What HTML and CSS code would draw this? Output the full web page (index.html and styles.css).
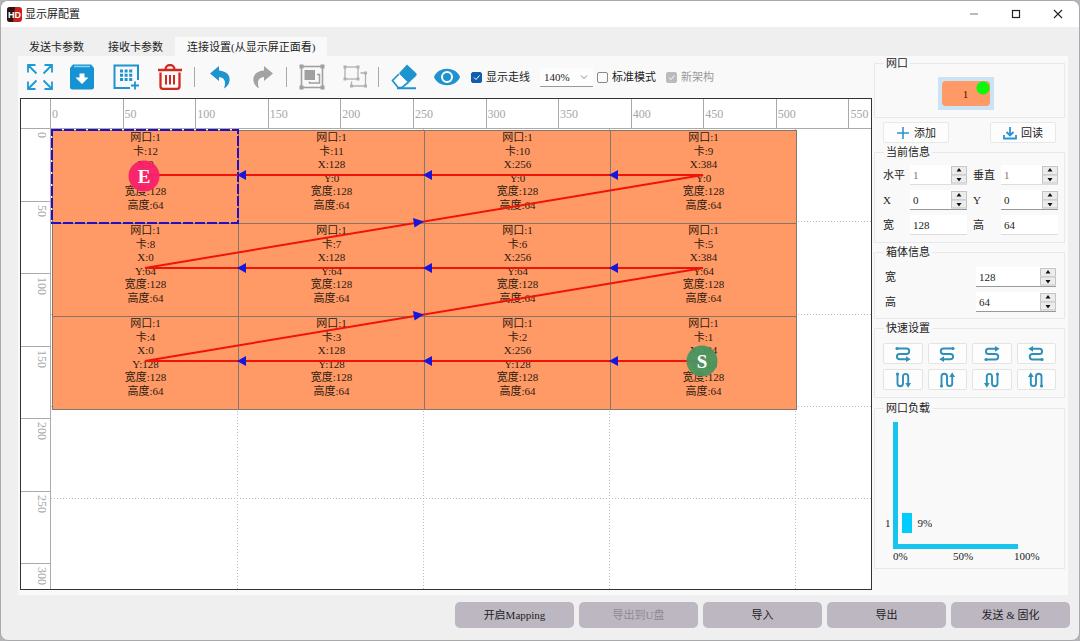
FILE: index.html
```html
<!DOCTYPE html>
<html lang="zh-CN">
<head>
<meta charset="utf-8">
<title>显示屏配置</title>
<link rel="stylesheet" href="styles.css">
</head>
<body>
<svg class="defs" aria-hidden="true">
  <symbol id="snake" viewBox="0 0 16 16">
    <circle cx="2" cy="2.500" r="1.600" fill="currentColor"/>
    <path d="M2 2.500H11.500a2.750 2.750 0 0 1 0 5.500H4.500a2.600 2.600 0 0 0 0 5.200H12" fill="none" stroke="currentColor" stroke-width="1.900"/>
    <path d="M11 10.300L15.700 13.200L11 16Z" fill="currentColor"/>
  </symbol>
</svg>
<div class="window">
  <header class="titlebar">
    <svg class="logo" viewBox="0 0 15 15">
      <rect width="15" height="15" rx="3" fill="#c9201c"/>
      <path d="M3 0H8L6 15H3a3 3 0 0 1-3-3V3a3 3 0 0 1 3-3Z" fill="#2a1414"/>
      <text x="1" y="11" class="logo-text">HD</text>
    </svg>
    <h1>显示屏配置</h1>
    <div class="winctl">
      <button aria-label="最小化"><svg viewBox="0 0 12 12"><path d="M2 6H10" stroke="#777"/></svg></button>
      <button aria-label="最大化"><svg viewBox="0 0 12 12"><rect x="2.500" y="2.500" width="7" height="7" fill="none" stroke="#222" stroke-width="1.200"/></svg></button>
      <button aria-label="关闭"><svg viewBox="0 0 12 12"><path d="M2 2L10 10M10 2L2 10" stroke="#222" stroke-width="1.100"/></svg></button>
    </div>
  </header>

  <nav class="tabs" role="tablist">
    <button role="tab">发送卡参数</button>
    <button role="tab">接收卡参数</button>
    <button role="tab" class="active" aria-selected="true">连接设置(从显示屏正面看)</button>
  </nav>

  <main class="page">
    <section class="work">
      <div class="toolbar">
        <button class="tool" aria-label="全屏"><svg viewBox="0 0 26 26" fill="none" stroke="#1d9ad6" stroke-width="1.800"><path d="M1 8.500V1H8.500M1 1L9.500 9.500M17.500 1H25V8.500M25 1L16.500 9.500M1 17.500V25H8.500M1 25L9.500 16.500M17.500 25H25V17.500M25 25L16.500 16.500"/></svg></button>
        <button class="tool" aria-label="保存"><svg viewBox="0 0 26 26"><path d="M4 .5H22L25 4V23a2.500 2.500 0 0 1-2.500 2.500H3.500A2.500 2.500 0 0 1 1 23V4Z" fill="#1593d2"/><path d="M5 2.500H21" stroke="#8fd0ee" stroke-width="1.500"/><path d="M10.500 9.500H15.500V13.500H19.500L13 20L6.500 13.500H10.500Z" fill="#fff"/></svg></button>
        <button class="tool" aria-label="添加网格"><svg viewBox="0 0 26 26" fill="none" stroke="#1d93d0"><path d="M17 24H1.500V1.500H25V16" stroke-width="2"/><path d="M7 7H19.500M7 11.200H19.500M7 15.400H19.500" stroke-width="3" stroke-dasharray="3 1.600"/><path d="M18 21.500H26M22 17.500V25.500" stroke-width="1.800"/></svg></button>
        <button class="tool" aria-label="删除"><svg viewBox="0 0 26 26" fill="none" stroke="#cf2a20" stroke-width="2.300"><path d="M1 6H25M8.500 5.500a4.500 4.500 0 0 1 9 0M3.500 8.500V22.500a2.300 2.300 0 0 0 2.300 2.300H20.200a2.300 2.300 0 0 0 2.300-2.300V8.500"/><path d="M9 11V20.500M13 11V20.500M17 11V20.500" stroke-width="2"/></svg></button>
        <span class="sep"></span>
        <button class="tool" aria-label="撤销"><svg viewBox="0 0 26 26"><path d="M3 9.500L12 2V6.500C20 7 23.500 12 22.500 17C22 20.500 19.500 23 17 24.500C19 19 18.500 13.500 12 13V17Z" fill="#1d93d0"/></svg></button>
        <button class="tool" aria-label="重做"><svg viewBox="0 0 26 26"><path d="M23 9.500L14 2V6.500C6 7 2.500 12 3.500 17C4 20.500 6.500 23 9 24.500C7 19 7.500 13.500 14 13V17Z" fill="#a3a3a3"/></svg></button>
        <span class="sep"></span>
        <button class="tool" aria-label="组合" disabled><svg viewBox="0 0 26 26" fill="none" stroke="#a0a0a0"><rect x="2.500" y="2.500" width="21" height="21" stroke-width="1.600"/><path d="M5.500 6H16V16H5.500Z" fill="#a0a0a0" stroke="none"/><path d="M18 10.500H20.500V19H10.500V17.500" stroke-width="1.500"/><path d="M.5.500h4v4h-4ZM21.500.500h4v4h-4ZM.5 21.500h4v4h-4ZM21.500 21.500h4v4h-4Z" fill="#a0a0a0" stroke="none"/></svg></button>
        <button class="tool" aria-label="取消组合" disabled><svg viewBox="0 0 26 26" fill="none" stroke="#b0b0b0" stroke-width="1.300"><rect x="3" y="3" width="13" height="12"/><path d="M18.500 9H23.500V22H9.500V17.500"/><path d="M1.500 1.500h3v3h-3ZM14.500 1.500h3v3h-3ZM1.500 13.500h3v3h-3ZM14.500 13.500h3v3h-3ZM22 7.500h3v3h-3ZM22 20.500h3v3h-3ZM8 20.500h3v3h-3Z" fill="#b0b0b0" stroke="none"/></svg></button>
        <span class="sep"></span>
        <button class="tool" aria-label="擦除"><svg viewBox="0 0 26 26"><path d="M16 .5L25.500 9.500V11.500L17 19.500L8.500 10V8.500Z" fill="#1d93d0"/><path d="M8 10L1.500 16.500L7 23.500H11L17 18.500" fill="#fff" stroke="#1d93d0" stroke-width="1.700"/><path d="M6 24.200H25" stroke="#1d93d0" stroke-width="2"/></svg></button>
        <button class="tool" aria-label="预览"><svg viewBox="0 0 26 26"><path d="M0 13C4 2 22 2 26 13C22 24 4 24 0 13Z" fill="#1d93d0"/><circle cx="13" cy="13" r="5" fill="#1d93d0" stroke="#fff" stroke-width="2"/></svg></button>
        <div class="options">
          <label><input type="checkbox" checked>显示走线</label>
          <select aria-label="缩放"><option>140%</option></select>
          <label><input type="checkbox">标准模式</label>
          <label class="off"><input type="checkbox" checked disabled>新架构</label>
        </div>
      </div>

      <div class="canvas">
        <div class="corner"></div>
        <div class="ruler-x"><div class="ticks-x">
          <span>0</span><span>50</span><span>100</span><span>150</span><span>200</span><span>250</span><span>300</span><span>350</span><span>400</span><span>450</span><span>500</span><span>550</span>
        </div></div>
        <div class="ruler-y"><div class="ticks-y">
          <span>0</span><span>50</span><span>100</span><span>150</span><span>200</span><span>250</span><span>300</span>
        </div></div>
        <div class="plot">
          <svg class="guides" aria-hidden="true">
            <path d="M186.500 0V2000M372.500 0V2000M558.500 0V2000M744.500 0V2000M0 92.500H3000M0 185.500H3000M0 277.500H3000M0 369.500H3000"/>
          </svg>
          <div class="board">
            <div class="card"><span>网口:1</span><span>卡:12</span><span>X:0</span><span>Y:0</span><span>宽度:128</span><span>高度:64</span></div>
            <div class="card"><span>网口:1</span><span>卡:11</span><span>X:128</span><span>Y:0</span><span>宽度:128</span><span>高度:64</span></div>
            <div class="card"><span>网口:1</span><span>卡:10</span><span>X:256</span><span>Y:0</span><span>宽度:128</span><span>高度:64</span></div>
            <div class="card"><span>网口:1</span><span>卡:9</span><span>X:384</span><span>Y:0</span><span>宽度:128</span><span>高度:64</span></div>
            <div class="card"><span>网口:1</span><span>卡:8</span><span>X:0</span><span>Y:64</span><span>宽度:128</span><span>高度:64</span></div>
            <div class="card"><span>网口:1</span><span>卡:7</span><span>X:128</span><span>Y:64</span><span>宽度:128</span><span>高度:64</span></div>
            <div class="card"><span>网口:1</span><span>卡:6</span><span>X:256</span><span>Y:64</span><span>宽度:128</span><span>高度:64</span></div>
            <div class="card"><span>网口:1</span><span>卡:5</span><span>X:384</span><span>Y:64</span><span>宽度:128</span><span>高度:64</span></div>
            <div class="card"><span>网口:1</span><span>卡:4</span><span>X:0</span><span>Y:128</span><span>宽度:128</span><span>高度:64</span></div>
            <div class="card"><span>网口:1</span><span>卡:3</span><span>X:128</span><span>Y:128</span><span>宽度:128</span><span>高度:64</span></div>
            <div class="card"><span>网口:1</span><span>卡:2</span><span>X:256</span><span>Y:128</span><span>宽度:128</span><span>高度:64</span></div>
            <div class="card"><span>网口:1</span><span>卡:1</span><span>X:384</span><span>Y:128</span><span>宽度:128</span><span>高度:64</span></div>
            <svg class="wires" viewBox="0 0 744 279">
              <rect class="selection" x="0" y="0" width="186" height="93"/>
              <path class="wire" d="M651 231H93L651 138H93L651 45H93"/>
              <g fill="#1616dc">
                <path d="M185 45l9-5v10ZM371 45l9-5v10ZM557 45l9-5v10Z"/>
                <path d="M185 138l9-5v10ZM371 138l9-5v10ZM557 138l9-5v10Z"/>
                <path d="M185 231l9-5v10ZM371 231l9-5v10ZM557 231l9-5v10Z"/>
                <path d="M372 91.500l-11-3.500l1.500 9.600ZM372 184.500l-11-3.500l1.500 9.600Z"/>
              </g>
              <circle cx="92" cy="46" r="15.500" fill="#f8206b" fill-opacity=".95"/>
              <text class="end" x="92" y="53">E</text>
              <circle cx="650" cy="231" r="15.500" fill="#4a955f" fill-opacity=".95"/>
              <text class="end" x="650" y="238">S</text>
            </svg>
          </div>
        </div>
      </div>
    </section>

    <aside class="side">
      <fieldset class="ports">
        <legend>网口</legend>
        <button class="port"><span>1</span></button>
      </fieldset>
      <div class="actions">
        <button><svg viewBox="0 0 14 14"><path d="M7 1V13M1 7H13" stroke="#2b93cf" stroke-width="1.600"/></svg>添加</button>
        <button><svg viewBox="0 0 14 14" fill="none" stroke="#2b93cf" stroke-width="1.800"><path d="M7 1V9M3.500 6L7 9.500L10.500 6M1 9V12.500H13V9"/></svg>回读</button>
      </div>
      <fieldset class="info">
        <legend>当前信息</legend>
        <label for="h">水平</label>
        <div class="field dim"><input id="h" value="1"><div class="spin"><button aria-label="增加"></button><button aria-label="减少"></button></div></div>
        <label for="v">垂直</label>
        <div class="field dim"><input id="v" value="1"><div class="spin"><button aria-label="增加"></button><button aria-label="减少"></button></div></div>
        <label for="x">X</label>
        <div class="field"><input id="x" value="0"><div class="spin"><button aria-label="增加"></button><button aria-label="减少"></button></div></div>
        <label for="y">Y</label>
        <div class="field"><input id="y" value="0"><div class="spin"><button aria-label="增加"></button><button aria-label="减少"></button></div></div>
        <label for="w">宽</label>
        <div class="field flat"><input id="w" value="128"></div>
        <label for="t">高</label>
        <div class="field flat"><input id="t" value="64"></div>
      </fieldset>
      <fieldset class="cabinet">
        <legend>箱体信息</legend>
        <label for="cw">宽</label>
        <div class="field"><input id="cw" value="128"><div class="spin"><button aria-label="增加"></button><button aria-label="减少"></button></div></div>
        <label for="ch">高</label>
        <div class="field"><input id="ch" value="64"><div class="spin"><button aria-label="增加"></button><button aria-label="减少"></button></div></div>
      </fieldset>
      <fieldset class="quick">
        <legend>快速设置</legend>
        <button aria-label="左上横向"><svg viewBox="0 0 16 16"><use href="#snake" width="16" height="16"/></svg></button>
        <button aria-label="右上横向"><svg viewBox="0 0 16 16"><g transform="matrix(-1 0 0 1 16 0)"><use href="#snake" width="16" height="16"/></g></svg></button>
        <button aria-label="左下横向"><svg viewBox="0 0 16 16"><g transform="matrix(1 0 0 -1 0 16)"><use href="#snake" width="16" height="16"/></g></svg></button>
        <button aria-label="右下横向"><svg viewBox="0 0 16 16"><g transform="matrix(-1 0 0 -1 16 16)"><use href="#snake" width="16" height="16"/></g></svg></button>
        <button aria-label="左上纵向"><svg viewBox="0 0 16 16"><g transform="matrix(0 1 1 0 0 0)"><use href="#snake" width="16" height="16"/></g></svg></button>
        <button aria-label="左下纵向"><svg viewBox="0 0 16 16"><g transform="matrix(0 -1 1 0 0 16)"><use href="#snake" width="16" height="16"/></g></svg></button>
        <button aria-label="右上纵向"><svg viewBox="0 0 16 16"><g transform="matrix(0 1 -1 0 16 0)"><use href="#snake" width="16" height="16"/></g></svg></button>
        <button aria-label="右下纵向"><svg viewBox="0 0 16 16"><g transform="matrix(0 -1 -1 0 16 16)"><use href="#snake" width="16" height="16"/></g></svg></button>
      </fieldset>
      <fieldset class="load">
        <legend>网口负载</legend>
        <div class="chart">
          <span class="cat">1</span>
          <div class="bars"><span class="bar" style="width:9%"></span><span>9%</span></div>
          <div class="axis"><span>0%</span><span>50%</span><span>100%</span></div>
        </div>
      </fieldset>
    </aside>
  </main>

  <footer class="footer">
    <button>开启Mapping</button>
    <button disabled>导出到U盘</button>
    <button>导入</button>
    <button>导出</button>
    <button>发送 &amp; 固化</button>
  </footer>
</div>
</body>
</html>
```
FILE: styles.css
```css
* { box-sizing: border-box; }
body {
  margin: 0;
  background: #b4b4b8;
  color: #222;
  font: 11px/14px "Liberation Serif", "Noto Sans CJK SC", serif;
}
button, input, select { font: inherit; color: inherit; margin: 0; }
button { border: 0; padding: 0; background: none; }
svg { display: block; }
.defs { position: absolute; width: 0; height: 0; }

.window {
  display: flex;
  flex-direction: column;
  min-height: 100vh;
  border: 1px solid #a9a9ab;
  border-radius: 8px;
  overflow: hidden;
  background: #efefef;
}

.titlebar {
  display: flex;
  align-items: center;
  height: 26px;
  padding-left: 6px;
  background: #fff;
}
.logo { width: 15px; height: 15px; }
.logo-text { font: bold 9px "Liberation Sans", sans-serif; fill: #fff; }
.titlebar h1 { margin: 0 auto 0 3px; font-size: 11px; font-weight: normal; }
.winctl { display: flex; }
.winctl button { width: 42px; display: grid; place-items: center; }
.winctl svg { width: 12px; height: 12px; }

.tabs { display: flex; padding: 10px 16px 0; }
.tabs button { height: 19px; padding: 0 12px; }
.tabs .active { background: #f9f9f9; }

.page {
  flex: 1;
  display: flex;
  margin: 0 11px 0 17px;
  background: #f9f9f9;
}
.work { flex: 1; min-width: 0; display: flex; flex-direction: column; padding: 0 0 5px 2px; }

.toolbar { display: flex; align-items: center; height: 42px; }
.tool { width: 43px; display: grid; place-items: center; }
.tool:first-child { width: 40px; }
.tool:nth-child(-n+4):not(:first-child) { width: 44px; }
.tool svg { width: 26px; height: 26px; }
.sep { width: 1px; height: 20px; margin: 0 3px 0 2px; background: #aaa; }
.options { display: flex; align-items: center; gap: 4px; padding-left: 3px; white-space: nowrap; }
.options label { display: flex; align-items: center; gap: 4px; margin-right: 6px; }
.options input {
  appearance: none;
  width: 11px;
  height: 11px;
  border: 1px solid #888;
  border-radius: 2px;
  background: #fafafa;
}
.options input:checked {
  border-color: #0f5fae;
  background: #0f5fae url("data:image/svg+xml,%3Csvg xmlns='http://www.w3.org/2000/svg' viewBox='0 0 9 9'%3E%3Cpath d='M2 4.500L4 6.500L7.500 2.500' fill='none' stroke='white'/%3E%3C/svg%3E");
}
.options input:disabled { border-color: #bbb; background-color: #bbb; }
.options .off { color: #999; }
.options select {
  appearance: none;
  width: 53px;
  height: 19px;
  padding: 0 4px;
  border: 0;
  border-bottom: 1px solid #999;
  border-radius: 0;
  background: #fdfdfd url("data:image/svg+xml,%3Csvg xmlns='http://www.w3.org/2000/svg' viewBox='0 0 8 8'%3E%3Cpath d='M1 2.500L4 5.500L7 2.500' fill='none' stroke='%23888'/%3E%3C/svg%3E") no-repeat right 5px center / 8px 8px;
}

.canvas {
  flex: 1;
  display: grid;
  grid-template: 30px 1fr / 30px 1fr;
  border: 1px solid #333;
  background: #fff;
  color: #a6a6a6;
  font-size: 12px;
}
.corner { border-bottom: 1px solid #aaa; border-right: 1px solid #aaa; }
.ruler-x { min-width: 0; overflow: hidden; border-bottom: 1px solid #aaa; }
.ticks-x { display: grid; grid-template-columns: repeat(12, 1fr); width: 871px; height: 100%; margin-left: -1px; }
.ticks-x span { border-left: 1px solid #aaa; padding: 8px 0 0 1px; }
.ruler-y { contain: size; overflow: hidden; border-right: 1px solid #aaa; }
.ticks-y { display: grid; grid-template-rows: repeat(7, 1fr); height: 508px; margin-top: -1px; }
.ticks-y span { writing-mode: vertical-rl; border-top: 1px solid #aaa; padding: 3px 1px 0 0; }

.plot { position: relative; min-width: 0; overflow: hidden; padding: 1px; }
.guides { position: absolute; left: 0; top: 0; width: 100%; height: 100%; }
.guides path { stroke: #bbb; stroke-dasharray: 1 2; }
.board {
  position: relative;
  display: grid;
  grid-template-columns: repeat(4, 186px);
  grid-auto-rows: 93px;
  width: 745px;
  border: solid #83766c;
  border-width: 0 1px 1px 0;
  color: #2e1a10;
  font-size: 11px;
}
.card {
  display: flex;
  flex-direction: column;
  justify-content: space-between;
  padding-bottom: 11px;
  border: solid #83766c;
  border-width: 1px 0 0 1px;
  background: #ff9965;
  line-height: 13px;
  text-align: center;
}
.wires { position: absolute; left: 0; top: 0; width: 744px; height: 279px; overflow: visible; }
.wire { fill: none; stroke: #f01408; stroke-width: 2; }
.selection { fill: none; stroke: #2210c0; stroke-width: 2; stroke-dasharray: 10 2; }
.end { fill: #fff; font: bold 19px "Liberation Serif", serif; text-anchor: middle; }

.side { width: 196px; padding: 0 3px 0 2px; }
fieldset { min-width: 0; margin: 2px 0 0; padding: 6px 8px; border: 1px solid #e8e8e8; }
legend { margin-left: 1px; padding: 0 2px; }
.ports { display: flex; justify-content: center; margin: 0; padding: 7px 16px 7px 8px; }
.port { width: 56px; height: 33px; padding: 4px; background: #cbe3f4; }
.port span {
  display: grid;
  place-items: center;
  height: 100%;
  border-radius: 4px;
  color: #3a1a08;
  background: radial-gradient(circle at 41px 7px, #0bf70b 6px, #ff9965 7px);
}
.ports legend { margin-right: 0; }
.actions { display: flex; justify-content: space-between; margin-top: 4px; padding: 0 9px; }
.actions button {
  display: flex;
  align-items: center;
  justify-content: center;
  gap: 4px;
  width: 66px;
  height: 21px;
  border: 1px solid #e8e8e8;
  border-radius: 2px;
  background: #fdfdfd;
}
.actions svg { width: 14px; height: 14px; }
.info {
  display: grid;
  grid-template-columns: 27px 57px 34px 57px;
  grid-auto-rows: 20px;
  row-gap: 5px;
  align-items: center;
  padding-bottom: 7px;
}
.info label:nth-of-type(even) { padding-left: 6px; }
.cabinet {
  display: grid;
  grid-template-columns: 1fr 80px;
  grid-auto-rows: 20px;
  row-gap: 5px;
  align-items: center;
  padding-top: 8px;
}
.cabinet label { padding-left: 2px; }
.field { display: flex; height: 20px; border-bottom: 1px solid #999; background: #fff; }
.field input { flex: 1; width: 0; min-width: 0; border: 0; padding: 0 3px; background: none; outline: 0; }
.field.dim { border-color: #ddd; color: #777; }
.field.flat { border-color: #ddd; }
.spin { display: grid; width: 16px; padding: 1px 0; }
.spin button {
  border: 1px solid #c4c4c4;
  background: #ececec url("data:image/svg+xml,%3Csvg xmlns='http://www.w3.org/2000/svg' viewBox='0 0 6 4'%3E%3Cpath d='M3 0L5.500 3.500H.5Z' fill='%23111'/%3E%3C/svg%3E") no-repeat center / 6px 4px;
}
.spin button:last-child { transform: rotate(180deg); }
.quick { display: grid; grid-template-columns: repeat(4, 1fr); grid-auto-rows: 21px; gap: 5px; padding: 8px 8px 7px; }
.quick button {
  display: grid;
  place-items: center;
  border: 1px solid #e4e4e4;
  border-radius: 2px;
  background: #fdfdfd;
  color: #2f8fb8;
}
.quick svg { width: 16px; height: 16px; }
.load { margin-top: 3px; padding: 7px 8px 5px; }
.chart {
  display: grid;
  grid-template: 127px 14px / 8px 125px;
  column-gap: 2px;
}
.cat { align-self: end; padding-bottom: 19px; padding-left: 2px; }
.bars {
  display: flex;
  align-items: flex-end;
  padding: 0 0 11px 4px;
  gap: 5px;
  border: solid #17c4ee;
  border-width: 0 0 5px 5px;
  line-height: 20px;
}
.bar { height: 20px; background: #00ccff; }
.axis { grid-column: 2; display: grid; grid-template-columns: 60px 61px 0; }

.footer { display: flex; flex-wrap: wrap; justify-content: flex-end; gap: 5px; padding: 7px 9px 12px; }
.footer button { width: 119px; height: 26px; border-radius: 5px; background: #bdb7c2; }
.footer button:disabled { color: #8f8a94; }
```
